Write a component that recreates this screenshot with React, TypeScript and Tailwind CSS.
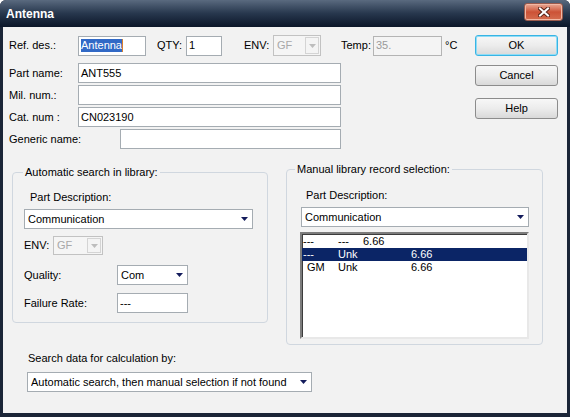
import React from 'react';

function Arrow({ color = '#141c5c' }: { color?: string }) {
  return (
    <svg width="7" height="4" viewBox="0 0 7 4" className="shrink-0">
      <polygon points="0,0 7,0 3.5,4" fill={color} />
    </svg>
  );
}

function Combo({ className, value }: { className: string; value: string }) {
  return (
    <div className={`flex items-center h-[20px] border border-[#a5acb2] bg-white pl-[3px] pr-[4px] ${className}`}>
      <span className="flex-1 truncate">{value}</span>
      <Arrow />
    </div>
  );
}

function DisabledCombo({ className }: { className: string }) {
  return (
    <div className={`flex border border-[#c2c2c2] bg-[#f5f5f5] p-[1px] ${className}`}>
      <span className="flex-1 flex items-center pl-[2px] text-[#a8a8a8]">GF</span>
      <span className="w-[14px] border border-[#d4d4d4] bg-[#f4f4f4] flex items-center justify-center">
        <Arrow color="#bdbdbd" />
      </span>
    </div>
  );
}

function Input({ className, children }: { className: string; children?: React.ReactNode }) {
  return (
    <div className={`flex items-center h-[20px] border border-[#a5acb2] bg-white pl-[2px] ${className}`}>
      {children}
    </div>
  );
}

function Btn({ label, focus, className = '' }: { label: string; focus?: boolean; className?: string }) {
  return (
    <div
      className={`h-[21px] w-[83px] flex items-center justify-center rounded-[3px] border bg-linear-to-b from-[#f7f7f7] via-[#ececec] to-[#d9d9d9] ${
        focus ? 'border-[#38b4e4] shadow-[inset_0_0_0_1px_#8fdcf6]' : 'border-[#8c8c8c]'
      } ${className}`}
    >
      {label}
    </div>
  );
}

const LIST = [
  { c1: '---', c2: '---', c3: '6.66', w: 'w-[25px]', pad: 'pl-[1px]', sel: false },
  { c1: '---', c2: 'Unk', c3: '6.66', w: 'w-[73px]', pad: 'pl-[1px]', sel: true },
  { c1: 'GM', c2: 'Unk', c3: '6.66', w: 'w-[73px]', pad: 'pl-[5px]', sel: false },
];

export default function App() {
  return (
    <div className="w-[570px] h-[417px] flex flex-col bg-[#1b2537] rounded-t-[6px] overflow-hidden font-['Liberation_Sans',Arial,sans-serif] text-[11px] leading-[13px] text-black">
      {/* title bar */}
      <div className="h-[27px] shrink-0 flex items-start pl-[6px] pr-[7px] pt-[3px] bg-linear-to-b from-[#5a6a7f] via-[#27374d] to-[#0c1729]">
        <span className="mt-[5px] font-bold text-[12px] text-white">Antenna</span>
        <div className="ml-auto w-[39px] h-[18px] rounded-[3px] border border-[#9a5a4c] flex items-center justify-center bg-linear-to-b from-[#e8a894] via-[#cc5236] to-[#d46c4e] shadow-[inset_0_0_0_1px_#f2b8a4]">
          <svg width="12" height="10" viewBox="0 0 12 10">
            <path d="M2 1.5 L10 8.5 M10 1.5 L2 8.5" stroke="#5a2418" strokeWidth="4" strokeLinecap="square" />
            <path d="M2 1.5 L10 8.5 M10 1.5 L2 8.5" stroke="#ffffff" strokeWidth="2" strokeLinecap="square" />
          </svg>
        </div>
      </div>

      {/* body */}
      <div className="flex-1 mx-[3px] mb-[4px] bg-[#f2f2f2] flex flex-col">
        <div className="flex pt-[8px] pl-[6px] pr-[9px]">
          <div className="flex-1">
            <div className="flex items-center h-[21px]">
              <span className="w-[69px]">Ref. des.:</span>
              <Input className="w-[68px]">
                <span className="bg-[#3169c6] text-white">Antenna</span>
                <span className="w-[1px] h-[13px] bg-[#d8802c]" />
              </Input>
              <span className="ml-[11px] w-[29px]">QTY:</span>
              <Input className="w-[36px]">1</Input>
              <span className="ml-[22px] w-[29px]">ENV:</span>
              <DisabledCombo className="w-[48px] h-[21px]" />
              <span className="ml-[20px] w-[32px]">Temp:</span>
              <div className="flex items-center h-[20px] w-[69px] border border-[#b4b4b4] bg-[#f4f4f4] pl-[2px] text-[#9a9a9a]">35.</div>
              <span className="ml-[3px]">°C</span>
            </div>
            <div className="mt-[7px] flex flex-col gap-[2px]">
              <div className="flex items-center h-[20px]">
                <span className="w-[69px]">Part name:</span>
                <Input className="w-[263px]">ANT555</Input>
              </div>
              <div className="flex items-center h-[20px]">
                <span className="w-[69px]">Mil. num.:</span>
                <Input className="w-[263px]" />
              </div>
              <div className="flex items-center h-[20px]">
                <span className="w-[69px]">Cat. num :</span>
                <Input className="w-[263px]">CN023190</Input>
              </div>
              <div className="flex items-center h-[20px]">
                <span className="w-[111px]">Generic name:</span>
                <Input className="w-[221px]" />
              </div>
            </div>
          </div>
          <div className="w-[83px] flex flex-col">
            <Btn label="OK" focus />
            <Btn label="Cancel" className="mt-[9px]" />
            <Btn label="Help" className="mt-[12px]" />
          </div>
        </div>

        <div className="flex items-start mt-[14px] pl-[9px]">
          <fieldset className="mt-[3px] w-[256px] border border-[#d0d7df] rounded-[4px] pb-[9px]">
            <legend className="ml-[10px] px-[2px]">Automatic search in library:</legend>
            <div className="pl-[11px]">
              <div className="mt-[12px] ml-[6px]">Part Description:</div>
              <Combo className="mt-[5px] w-[229px]" value="Communication" />
              <div className="mt-[7px] flex items-center">
                <span className="w-[29px]">ENV:</span>
                <DisabledCombo className="w-[50px] h-[19px]" />
              </div>
              <div className="mt-[10px] flex items-center">
                <span className="w-[93px]">Quality:</span>
                <Combo className="w-[71px]" value="Com" />
              </div>
              <div className="mt-[8px] flex items-center">
                <span className="w-[93px]">Failure Rate:</span>
                <Input className="w-[71px] h-[19px]">---</Input>
              </div>
            </div>
          </fieldset>

          <fieldset className="ml-[18px] w-[257px] border border-[#d0d7df] rounded-[4px] pb-[5px]">
            <legend className="ml-[8px] px-[2px]">Manual library record selection:</legend>
            <div className="pl-[13px]">
              <div className="mt-[13px] ml-[6px]">Part Description:</div>
              <Combo className="mt-[5px] ml-[1px] w-[228px]" value="Communication" />
              <div className="mt-[5px] w-[229px] h-[107px] border-2 border-t-[#7c7c7c] border-l-[#7c7c7c] border-r-[#e8e8e8] border-b-[#e8e8e8] shadow-[inset_1px_1px_0_#3c3c3c] bg-white pt-[1px]">
                {LIST.map((r, i) => (
                  <div
                    key={i}
                    className={`flex h-[13px] items-center ${r.sel ? 'bg-[#0b2566] text-white' : ''}`}
                  >
                    <span className={`w-[36px] ${r.pad}`}>{r.c1}</span>
                    <span className={r.w}>{r.c2}</span>
                    <span>{r.c3}</span>
                  </div>
                ))}
              </div>
            </div>
          </fieldset>
        </div>

        <div className="mt-[7px] pl-[25px]">Search data for calculation by:</div>
        <Combo className="mt-[7px] ml-[24px] w-[285px]" value="Automatic search, then manual selection if not found" />
      </div>
    </div>
  );
}
